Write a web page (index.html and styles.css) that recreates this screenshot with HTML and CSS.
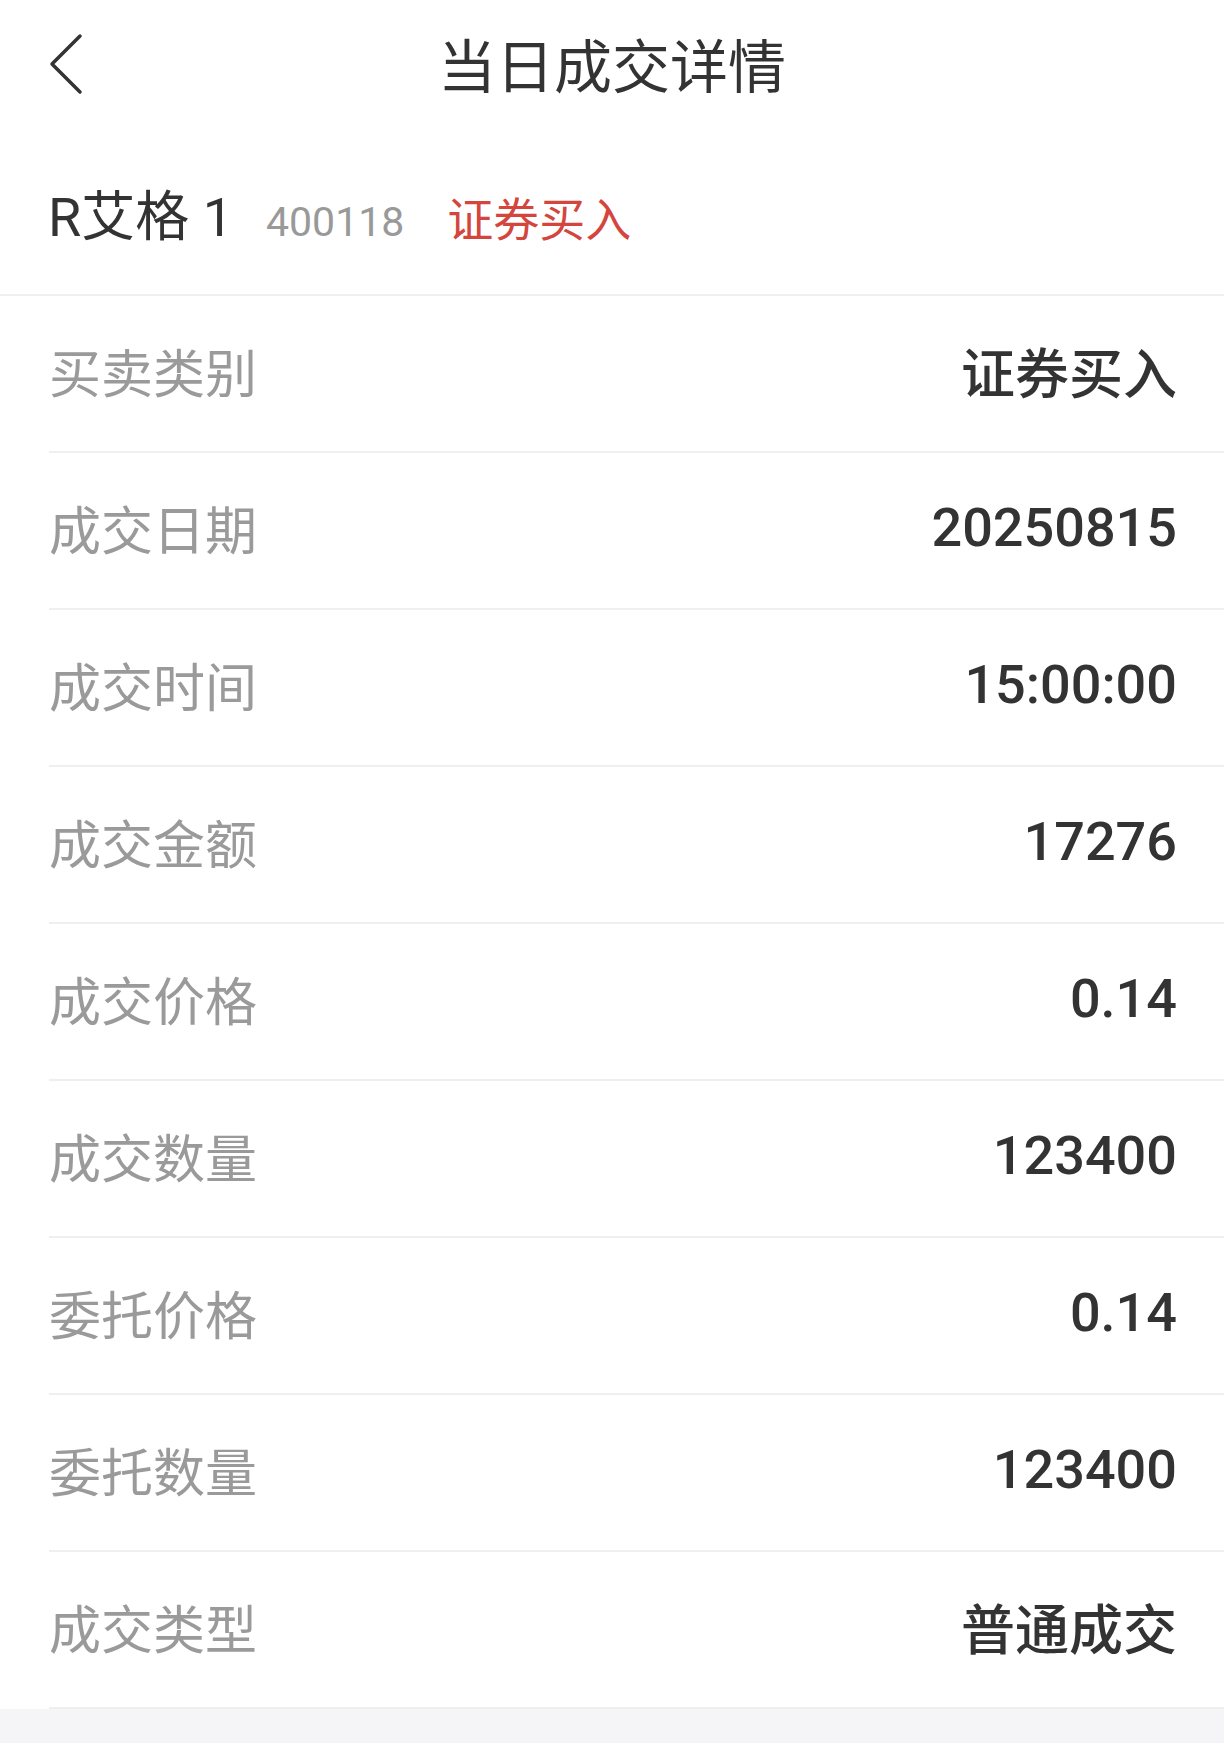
FILE: index.html
```html
<!DOCTYPE html>
<html lang="zh-CN">
<head>
  <meta charset="UTF-8">
  <title>当日成交详情</title>
  <link rel="stylesheet" href="styles.css">
</head>
<body>

  <header class="nav-bar">
    <a class="back-btn" href="#">
      <svg width="40" height="64" viewBox="0 0 40 64">
        <path d="M32 4 L4 32 L32 60" fill="none" stroke="#333" stroke-width="3.5" stroke-linecap="round" stroke-linejoin="round"/>
      </svg>
    </a>
    <h1 class="nav-title">当日成交详情</h1>
  </header>

  <div class="stock-head">
    <div class="stock-line">
      <span class="stock-name">R艾格 1</span>
      <span class="stock-code">400118</span>
      <span class="stock-side">证券买入</span>
    </div>
  </div>

  <ul class="detail-list">
    <li class="detail-row"><span class="detail-label">买卖类别</span><span class="detail-value">证券买入</span></li>
    <li class="detail-row"><span class="detail-label">成交日期</span><span class="detail-value">20250815</span></li>
    <li class="detail-row"><span class="detail-label">成交时间</span><span class="detail-value">15:00:00</span></li>
    <li class="detail-row"><span class="detail-label">成交金额</span><span class="detail-value">17276</span></li>
    <li class="detail-row"><span class="detail-label">成交价格</span><span class="detail-value">0.14</span></li>
    <li class="detail-row"><span class="detail-label">成交数量</span><span class="detail-value">123400</span></li>
    <li class="detail-row"><span class="detail-label">委托价格</span><span class="detail-value">0.14</span></li>
    <li class="detail-row"><span class="detail-label">委托数量</span><span class="detail-value">123400</span></li>
    <li class="detail-row"><span class="detail-label">成交类型</span><span class="detail-value">普通成交</span></li>
  </ul>

</body>
</html>
```

FILE: styles.css
```css
* {
  margin: 0;
  padding: 0;
  box-sizing: border-box;
}

body {
  font-family: Roboto, "Noto Sans CJK SC", sans-serif;
  background: #f5f5f7;
  color: #333;
  min-height: 100vh;
}

.nav-bar {
  position: relative;
  height: 128px;
  padding-top: 8px;
  background: #fff;
  display: flex;
  align-items: center;
  justify-content: center;
}

.back-btn {
  position: absolute;
  left: 48px;
  top: 32px;
  display: block;
}

.nav-title {
  font-size: 58px;
  font-weight: 400;
  color: #333;
  line-height: 1;
}

.stock-head {
  height: 168px;
  background: #fff;
  border-bottom: 2px solid #efefef;
  display: flex;
  align-items: center;
  padding-left: 48px;
  padding-top: 2px;
}

.stock-line {
  white-space: nowrap;
}

.stock-name {
  font-size: 54px;
  color: #333;
}

.stock-code {
  font-size: 41px;
  color: #999;
  margin-left: 29px;
}

.stock-side {
  font-size: 46px;
  color: #d4463d;
  margin-left: 39px;
}

.detail-list {
  list-style: none;
  background: #fff;
  padding-left: 49px;
}

.detail-row {
  height: 157px;
  border-bottom: 2px solid #efefef;
  display: flex;
  align-items: center;
  justify-content: space-between;
  padding-right: 47px;
  padding-bottom: 6px;
}

.detail-label {
  font-size: 52px;
  color: #9a9a9a;
}

.detail-value {
  font-size: 54px;
  font-weight: 500;
  color: #333;
}
```
